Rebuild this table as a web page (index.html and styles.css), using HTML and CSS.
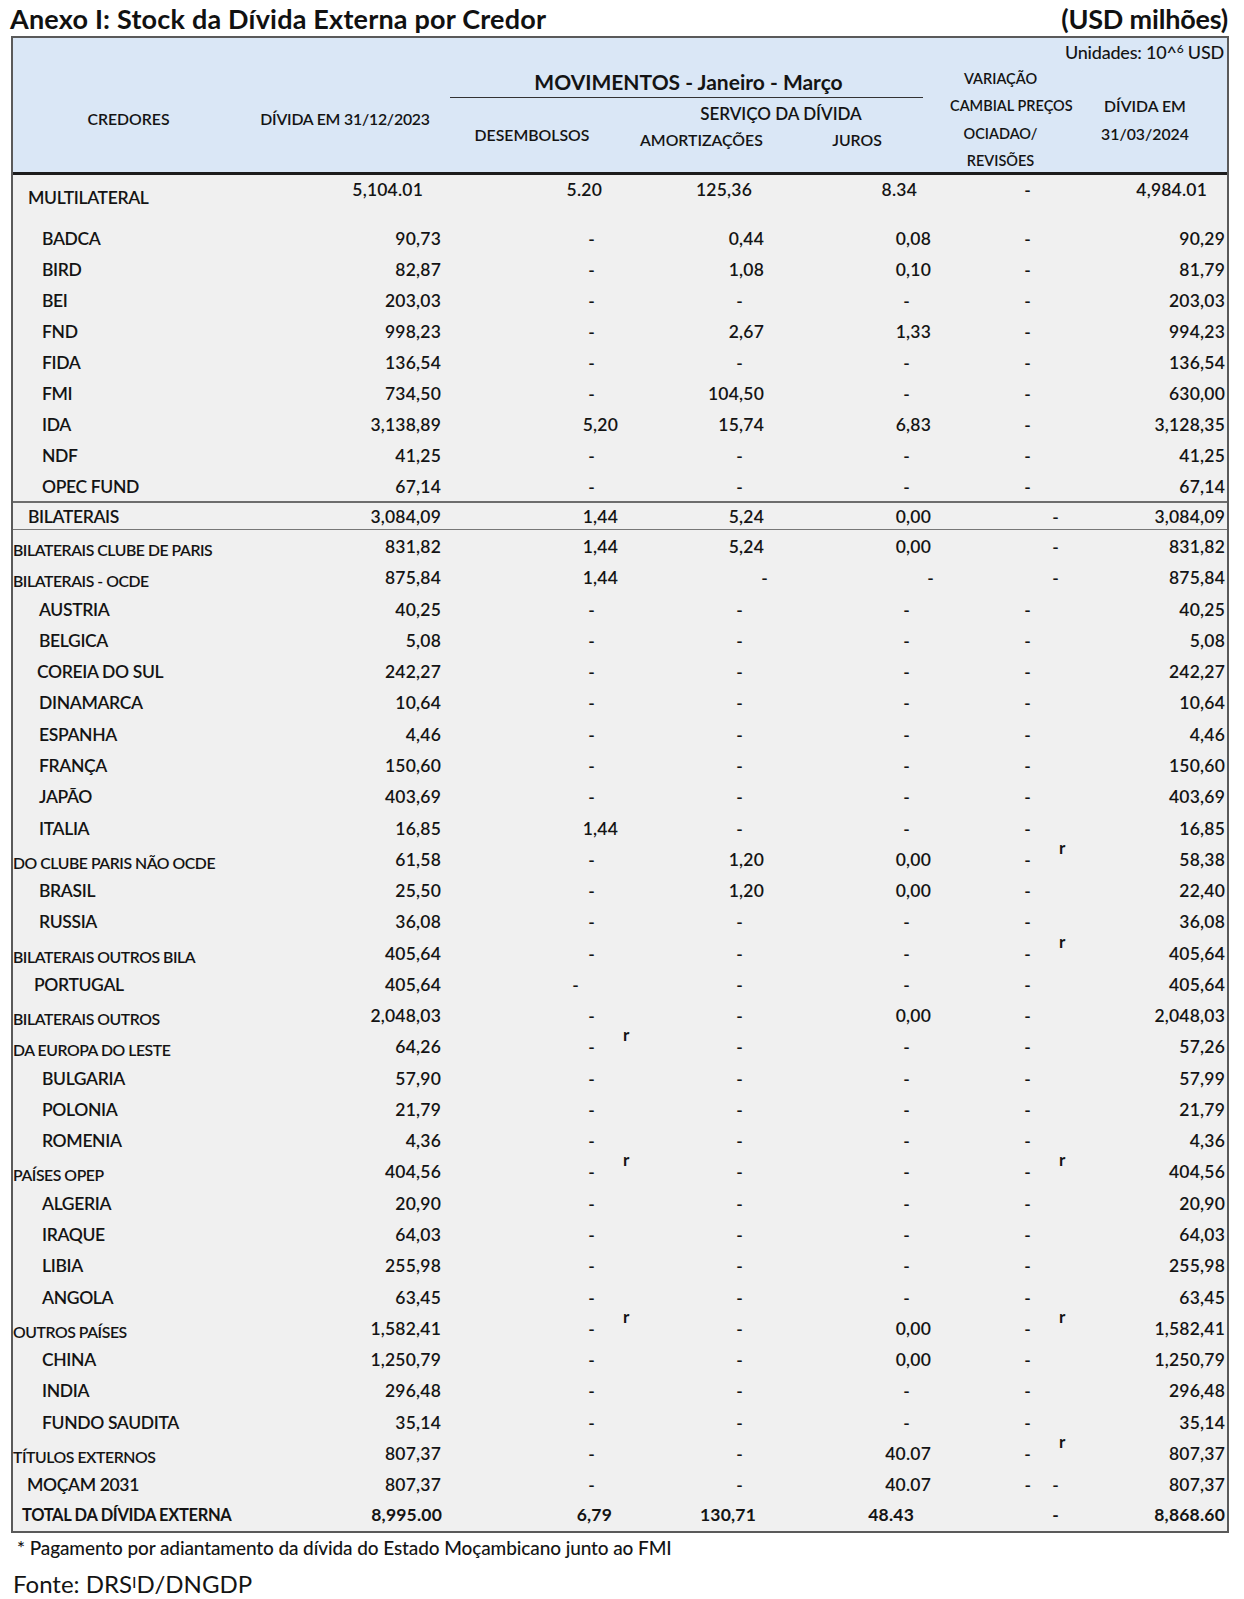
FILE: index.html
```html
<!DOCTYPE html>
<html lang="pt">
<head>
<meta charset="utf-8">
<title>Anexo I: Stock da Dívida Externa por Credor</title>
<link rel="stylesheet" href="styles.css">
</head>
<body>
<div class="titlebar">
  <h1 class="title">Anexo I: Stock da Dívida Externa por Credor</h1>
  <div class="unit">(USD milhões)</div>
</div>

<div class="sheet">
  <div class="head">
    <div class="h-units">Unidades: 10^<sup>6</sup> USD</div>
    <div class="h-cred">CREDORES</div>
    <div class="h-d23">DÍVIDA EM 31/12/2023</div>
    <div class="h-mov">MOVIMENTOS - Janeiro - Março</div>
    <div class="h-des">DESEMBOLSOS</div>
    <div class="h-serv">
      <div class="h-serv-t">SERVIÇO DA DÍVIDA</div>
      <div class="h-amort">AMORTIZAÇÕES</div>
      <div class="h-juros">JUROS</div>
    </div>
    <div class="h-var">VARIAÇÃO<br>CAMBIAL PREÇOS<br>OCIADAO/<br>REVISÕES</div>
    <div class="h-d24">DÍVIDA EM<br>31/03/2024</div>
  </div>

  <div class="body">
    <div class="row multi">
      <div class="lbl">MULTILATERAL</div><div>5,104.01</div><div>5.20</div><div>125,36</div><div>8.34</div><div>-</div><div>4,984.01</div>
    </div>
    <div class="row r31"><div class="lbl i3">BADCA</div><div>90,73</div><div class="d">-</div><div>0,44</div><div>0,08</div><div>-</div><div>90,29</div></div>
    <div class="row r31"><div class="lbl i3">BIRD</div><div>82,87</div><div class="d">-</div><div>1,08</div><div>0,10</div><div>-</div><div>81,79</div></div>
    <div class="row r31"><div class="lbl i3">BEI</div><div>203,03</div><div class="d">-</div><div class="d">-</div><div class="d">-</div><div>-</div><div>203,03</div></div>
    <div class="row r31"><div class="lbl i3">FND</div><div>998,23</div><div class="d">-</div><div>2,67</div><div>1,33</div><div>-</div><div>994,23</div></div>
    <div class="row r31"><div class="lbl i3">FIDA</div><div>136,54</div><div class="d">-</div><div class="d">-</div><div class="d">-</div><div>-</div><div>136,54</div></div>
    <div class="row r31"><div class="lbl i3">FMI</div><div>734,50</div><div class="d">-</div><div>104,50</div><div class="d">-</div><div>-</div><div>630,00</div></div>
    <div class="row r31"><div class="lbl i3">IDA</div><div>3,138,89</div><div>5,20</div><div>15,74</div><div>6,83</div><div>-</div><div>3,128,35</div></div>
    <div class="row r31"><div class="lbl i3">NDF</div><div>41,25</div><div class="d">-</div><div class="d">-</div><div class="d">-</div><div>-</div><div>41,25</div></div>
    <div class="row r31"><div class="lbl i3">OPEC FUND</div><div>67,14</div><div class="d">-</div><div class="d">-</div><div class="d">-</div><div>-</div><div>67,14</div></div>

    <div class="row bil"><div class="lbl">BILATERAIS</div><div>3,084,09</div><div>1,44</div><div>5,24</div><div>0,00</div><div class="alt">-</div><div>3,084,09</div></div>

    <div class="row"><div class="lbl g">BILATERAIS CLUBE DE PARIS</div><div>831,82</div><div>1,44</div><div>5,24</div><div>0,00</div><div class="alt">-</div><div>831,82</div></div>
    <div class="row"><div class="lbl g">BILATERAIS - OCDE</div><div>875,84</div><div>1,44</div><div class="far">-</div><div class="far">-</div><div class="alt">-</div><div>875,84</div></div>
    <div class="row"><div class="lbl i2">AUSTRIA</div><div>40,25</div><div class="d">-</div><div class="d">-</div><div class="d">-</div><div>-</div><div>40,25</div></div>
    <div class="row"><div class="lbl i2">BELGICA</div><div>5,08</div><div class="d">-</div><div class="d">-</div><div class="d">-</div><div>-</div><div>5,08</div></div>
    <div class="row"><div class="lbl i1">COREIA DO SUL</div><div>242,27</div><div class="d">-</div><div class="d">-</div><div class="d">-</div><div>-</div><div>242,27</div></div>
    <div class="row"><div class="lbl i2">DINAMARCA</div><div>10,64</div><div class="d">-</div><div class="d">-</div><div class="d">-</div><div>-</div><div>10,64</div></div>
    <div class="row"><div class="lbl i2">ESPANHA</div><div>4,46</div><div class="d">-</div><div class="d">-</div><div class="d">-</div><div>-</div><div>4,46</div></div>
    <div class="row"><div class="lbl i2">FRANÇA</div><div>150,60</div><div class="d">-</div><div class="d">-</div><div class="d">-</div><div>-</div><div>150,60</div></div>
    <div class="row"><div class="lbl i2">JAPÃO</div><div>403,69</div><div class="d">-</div><div class="d">-</div><div class="d">-</div><div>-</div><div>403,69</div></div>
    <div class="row"><div class="lbl i2">ITALIA</div><div>16,85</div><div>1,44</div><div class="d">-</div><div class="d">-</div><div>-</div><div>16,85</div></div>
    <div class="row"><div class="lbl g">DO CLUBE PARIS NÃO OCDE</div><div>61,58</div><div class="d">-</div><div>1,20</div><div>0,00</div><div>-<span class="r r6">r</span></div><div>58,38</div></div>
    <div class="row"><div class="lbl i2">BRASIL</div><div>25,50</div><div class="d">-</div><div>1,20</div><div>0,00</div><div>-</div><div>22,40</div></div>
    <div class="row"><div class="lbl i2">RUSSIA</div><div>36,08</div><div class="d">-</div><div class="d">-</div><div class="d">-</div><div>-</div><div>36,08</div></div>
    <div class="row"><div class="lbl g">BILATERAIS OUTROS BILA</div><div>405,64</div><div class="d">-</div><div class="d">-</div><div class="d">-</div><div>-<span class="r r6">r</span></div><div>405,64</div></div>
    <div class="row"><div class="lbl i0">PORTUGAL</div><div>405,64</div><div class="dl">-</div><div class="d">-</div><div class="d">-</div><div>-</div><div>405,64</div></div>
    <div class="row"><div class="lbl g">BILATERAIS OUTROS</div><div>2,048,03</div><div class="d">-</div><div class="d">-</div><div>0,00</div><div>-</div><div>2,048,03</div></div>
    <div class="row"><div class="lbl g">DA EUROPA DO LESTE</div><div>64,26</div><div class="d">-<span class="r r3">r</span></div><div class="d">-</div><div class="d">-</div><div>-</div><div>57,26</div></div>
    <div class="row"><div class="lbl i3">BULGARIA</div><div>57,90</div><div class="d">-</div><div class="d">-</div><div class="d">-</div><div>-</div><div>57,99</div></div>
    <div class="row"><div class="lbl i3">POLONIA</div><div>21,79</div><div class="d">-</div><div class="d">-</div><div class="d">-</div><div>-</div><div>21,79</div></div>
    <div class="row"><div class="lbl i3">ROMENIA</div><div>4,36</div><div class="d">-</div><div class="d">-</div><div class="d">-</div><div>-</div><div>4,36</div></div>
    <div class="row"><div class="lbl g">PAÍSES OPEP</div><div>404,56</div><div class="d">-<span class="r r3">r</span></div><div class="d">-</div><div class="d">-</div><div>-<span class="r r6">r</span></div><div>404,56</div></div>
    <div class="row"><div class="lbl i3">ALGERIA</div><div>20,90</div><div class="d">-</div><div class="d">-</div><div class="d">-</div><div>-</div><div>20,90</div></div>
    <div class="row"><div class="lbl i3">IRAQUE</div><div>64,03</div><div class="d">-</div><div class="d">-</div><div class="d">-</div><div>-</div><div>64,03</div></div>
    <div class="row"><div class="lbl i3">LIBIA</div><div>255,98</div><div class="d">-</div><div class="d">-</div><div class="d">-</div><div>-</div><div>255,98</div></div>
    <div class="row"><div class="lbl i3">ANGOLA</div><div>63,45</div><div class="d">-</div><div class="d">-</div><div class="d">-</div><div>-</div><div>63,45</div></div>
    <div class="row"><div class="lbl g">OUTROS PAÍSES</div><div>1,582,41</div><div class="d">-<span class="r r3">r</span></div><div class="d">-</div><div>0,00</div><div>-<span class="r r6">r</span></div><div>1,582,41</div></div>
    <div class="row"><div class="lbl i3">CHINA</div><div>1,250,79</div><div class="d">-</div><div class="d">-</div><div>0,00</div><div>-</div><div>1,250,79</div></div>
    <div class="row"><div class="lbl i3">INDIA</div><div>296,48</div><div class="d">-</div><div class="d">-</div><div class="d">-</div><div>-</div><div>296,48</div></div>
    <div class="row"><div class="lbl i3">FUNDO SAUDITA</div><div>35,14</div><div class="d">-</div><div class="d">-</div><div class="d">-</div><div>-</div><div>35,14</div></div>
    <div class="row"><div class="lbl g">TÍTULOS EXTERNOS</div><div>807,37</div><div class="d">-</div><div class="d">-</div><div>40.07</div><div>-<span class="r r6">r</span></div><div>807,37</div></div>
    <div class="row"><div class="lbl im">MOÇAM 2031</div><div>807,37</div><div class="d">-</div><div class="d">-</div><div>40.07</div><div class="alt">-<span class="dash2">-</span></div><div>807,37</div></div>
    <div class="row total"><div class="lbl it">TOTAL DA DÍVIDA EXTERNA</div><div>8,995.00</div><div>6,79</div><div>130,71</div><div>48.43</div><div class="alt">-</div><div>8,868.60</div></div>
  </div>
</div>

<p class="note">* Pagamento por adiantamento da dívida do Estado Moçambicano junto ao FMI</p>
<p class="source">Fonte: DRS<span class="small-i">I</span>D/DNGDP</p>
</body>
</html>
```

FILE: styles.css
```css
* { box-sizing: border-box; }

html, body {
  margin: 0;
  padding: 0;
  background: #ffffff;
}

body {
  width: 1244px;
  font-family: Lato, "Noto Sans", "DejaVu Sans", sans-serif;
  color: #141414;
}

/* ---------- title ---------- */
.titlebar {
  height: 36px;
  display: flex;
  align-items: center;
  justify-content: space-between;
  padding: 1px 16px 0 10px;
}
.title, .unit {
  margin: 0;
  font-size: 27px;
  font-weight: 700;
  color: #111;
}
.title { letter-spacing: 0.2px; }
.unit { letter-spacing: -0.2px; }

/* ---------- sheet ---------- */
.sheet {
  margin-left: 11px;
  width: 1218px;
  border: 2px solid #5a5a5a;
  background: #f0f0f0;
}

.head {
  display: grid;
  grid-template-columns: 237px 200px 190px 150px 160px 130px 147px;
  grid-template-rows: 27px 33px 74px;
  height: 137px;
  background: #dae7f6;
  border-bottom: 3px solid #1c1c1c;
  font-size: 15.8px;
  font-weight: 600;
  line-height: 20px;
  text-align: center;
  color: #141414;
}
.h-units {
  grid-column: 5 / 8;
  grid-row: 1;
  align-self: center;
  text-align: right;
  padding-right: 3px;
  font-size: 18px;
  font-weight: 500;
  letter-spacing: -0.2px;
}
.h-units sup {
  font-size: 12px;
  vertical-align: 6px;
  line-height: 0;
}
.h-cred {
  grid-column: 1;
  grid-row: 2 / 4;
  align-self: center;
  padding-right: 6px;
}
.h-d23 {
  grid-column: 2;
  grid-row: 2 / 4;
  align-self: center;
  padding-right: 10px;
  letter-spacing: -0.2px;
}
.h-mov {
  grid-column: 3 / 6;
  grid-row: 2;
  margin-right: 27px;
  border-bottom: 1.5px solid #333;
  font-size: 21px;
  font-weight: 700;
  display: flex;
  align-items: center;
  justify-content: center;
  padding-top: 2px;
  padding-left: 4px;
}
.h-des {
  grid-column: 3;
  grid-row: 3;
  align-self: center;
  padding-right: 26px;
}
.h-serv {
  grid-column: 4 / 6;
  grid-row: 3;
  display: grid;
  grid-template-columns: 150px 160px;
  grid-template-rows: 26px 26px;
  padding-top: 3px;
  align-content: start;
}
.h-serv-t {
  grid-column: 1 / 3;
  line-height: 26px;
  padding-right: 28px;
  font-size: 17px;
}
.h-amort {
  line-height: 26px;
  padding-right: 30px;
}
.h-juros {
  line-height: 26px;
  padding-right: 26px;
}
.h-var {
  grid-column: 6;
  grid-row: 2 / 4;
  align-self: start;
  line-height: 27.3px;
  font-size: 14.5px;
  padding-right: 29px;
  white-space: nowrap;
}
.h-d24 {
  grid-column: 7;
  grid-row: 2 / 4;
  align-self: center;
  line-height: 27.5px;
  padding-right: 17px;
  padding-top: 2px;
}

/* ---------- body rows ---------- */
.row {
  display: grid;
  grid-template-columns: 237px 200px 190px 150px 160px 130px 147px;
  height: 31.28px;
  align-items: center;
  font-size: 17.5px;
  font-weight: 600;
  line-height: 20px;
}
.row.r31 { height: 31px; }

.row > div {
  position: relative;
  text-align: right;
  white-space: nowrap;
  padding-top: 3px;
  letter-spacing: 0.2px;
}
.row > div.lbl {
  text-align: left;
  letter-spacing: -0.35px;
}

.row > :nth-child(2) { padding-right: 9px; }
.row > :nth-child(3) { padding-right: 22px; }
.row > :nth-child(3).d { padding-right: 45px; }
.row > :nth-child(3).dl { padding-right: 61px; }
.row > :nth-child(4) { padding-right: 26px; }
.row > :nth-child(4).d { padding-right: 47px; }
.row > :nth-child(4).far { padding-right: 22px; }
.row > :nth-child(5) { padding-right: 19px; }
.row > :nth-child(5).d { padding-right: 40px; }
.row > :nth-child(5).far { padding-right: 16px; }
.row > :nth-child(6) { padding-right: 49px; }
.row > :nth-child(6).alt { padding-right: 21px; }
.row > :nth-child(7) { padding-right: 2px; }

/* labels */
.row > .lbl.g {
  font-size: 15.8px;
  padding-left: 0;
  padding-top: 9px;
  letter-spacing: -0.45px;
}
.lbl.i0 { padding-left: 21px; }
.lbl.i1 { padding-left: 24px; }
.lbl.i2 { padding-left: 26px; }
.lbl.i3 { padding-left: 29px; }
.lbl.im { padding-left: 14px; }
.lbl.it { padding-left: 9px; font-size: 16.5px; }

/* multilateral */
.row.multi {
  height: 47px;
  align-items: start;
}
.row.multi > div { padding-top: 5px; }
.row.multi > .lbl { padding-top: 13px; padding-left: 15px; }
.row.multi > :nth-child(2) { padding-right: 27px; }
.row.multi > :nth-child(3) { padding-right: 38px; }
.row.multi > :nth-child(4) { padding-right: 38px; }
.row.multi > :nth-child(5) { padding-right: 33px; }
.row.multi > :nth-child(7) { padding-right: 20px; }

/* bilaterais box */
.row.bil {
  height: 29px;
  border-top: 2px solid #6d6d6d;
  border-bottom: 1.5px solid #777;
}
.row.bil > div { padding-top: 1px; }
.row.bil > .lbl { padding-left: 15px; }

/* total */
.row.total { font-weight: 700; }
.row.total > div { padding-top: 1px; }
.row.total > :nth-child(2) { padding-right: 8px; }
.row.total > :nth-child(3) { padding-right: 28px; }
.row.total > :nth-child(4) { padding-right: 34px; }
.row.total > :nth-child(5) { padding-right: 36px; }

/* revision marks */
.r {
  position: absolute;
  top: -9px;
  font-size: 17px;
  font-weight: 700;
}
.r6 { left: 109px; }
.r3 { left: 173px; }
.dash2 { margin-left: 21px; }

/* ---------- notes ---------- */
.note {
  margin: 4px 0 0 17px;
  font-size: 19px;
  line-height: 22px;
  font-weight: 500;
  letter-spacing: -0.1px;
}
.source {
  margin: 8px 0 0 13px;
  font-size: 24px;
  line-height: 30px;
  font-weight: 400;
}
.small-i {
  font-size: 16px;
  vertical-align: 5px;
}
```
